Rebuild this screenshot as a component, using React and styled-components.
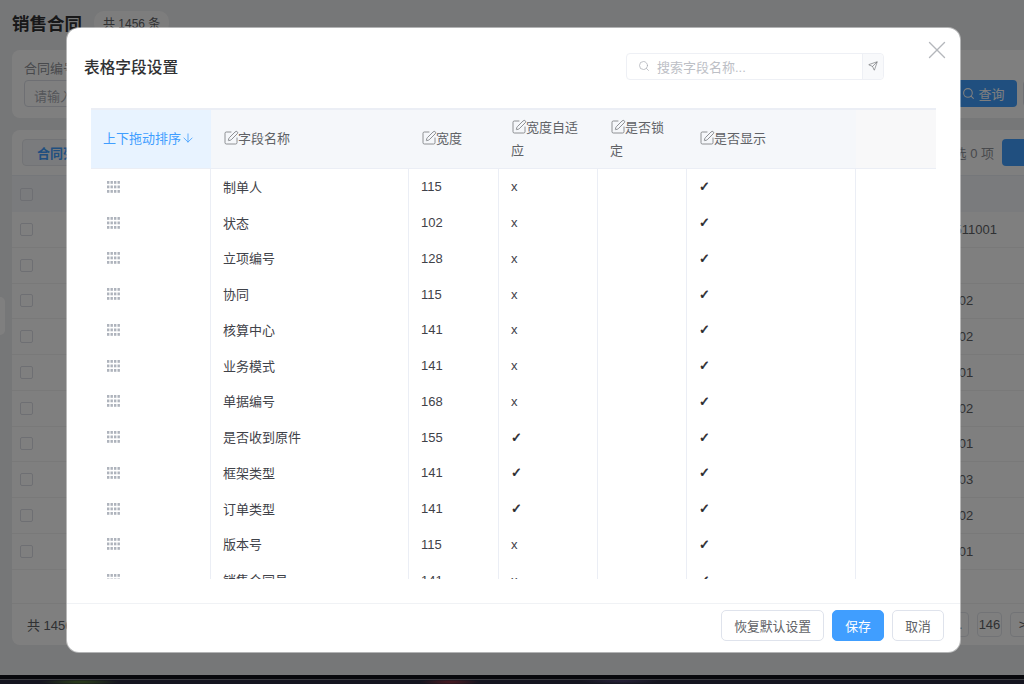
import React from "react";
import styled, { createGlobalStyle } from "styled-components";
import { ArrowDown, Search, Send, SquarePen, X } from "lucide-react";

const fields = [
  { name: "制单人", width: 115, fit: false },
  { name: "状态", width: 102, fit: false },
  { name: "立项编号", width: 128, fit: false },
  { name: "协同", width: 115, fit: false },
  { name: "核算中心", width: 141, fit: false },
  { name: "业务模式", width: 141, fit: false },
  { name: "单据编号", width: 168, fit: false },
  { name: "是否收到原件", width: 155, fit: true },
  { name: "框架类型", width: 141, fit: true },
  { name: "订单类型", width: 141, fit: true },
  { name: "版本号", width: 115, fit: false },
  { name: "销售合同号", width: 141, fit: false },
];

const backgroundRows = ["20511001", "", "SO02", "SO02", "SO01", "SO02", "SO01", "SO03", "SO02", "SO01"];

function GripIcon() {
  const dots = [];
  for (let row = 0; row < 3; row++) {
    for (let col = 0; col < 4; col++) {
      dots.push(<rect key={`${row}-${col}`} x={col * 3.5} y={row * 4.5} width="2.4" height="2.8" />);
    }
  }
  return (
    <svg width="13" height="12" viewBox="0 0 13 12" fill="#aeb3bc">
      {dots}
    </svg>
  );
}

function EditLabel({ children }) {
  return (
    <>
      <EditIcon size={16} strokeWidth={1.2} />
      {children}
    </>
  );
}

export default function App() {
  return (
    <>
      <GlobalStyle />
      <Screen>
        <Page>
          <TitleRow>
            <PageTitle>销售合同</PageTitle>
            <CountBadge>共 1456 条</CountBadge>
          </TitleRow>
          <FilterCard>
            <FilterField>
              <FilterLabel>合同编号</FilterLabel>
              <FilterInput>请输入</FilterInput>
            </FilterField>
            <FilterActions>
              <QueryButton>
                <Search size={13} />
                查询
              </QueryButton>
              <ResetButton />
            </FilterActions>
          </FilterCard>
          <TableCard>
            <TableToolbar>
              <TabButton>合同列表</TabButton>
              <Selected>已选 0 项</Selected>
              <AddButton />
            </TableToolbar>
            <BackHead>
              <BackCheck />
            </BackHead>
            {backgroundRows.map((value, index) => (
              <BackRow key={index}>
                <BackCheck />
                <BackValue>{value}</BackValue>
              </BackRow>
            ))}
            <Pager>
              <span>共 1456 条</span>
              <PagerRight>
                <PageButton>…</PageButton>
                <PageButton>146</PageButton>
                <PageButton>&gt;</PageButton>
              </PagerRight>
            </Pager>
          </TableCard>
          <SideHandle />
        </Page>

        <Overlay>
          <Modal>
            <ModalHeader>
              <ModalTitle>表格字段设置</ModalTitle>
              <SearchBox>
                <SearchField>
                  <Search size={12} strokeWidth={1.4} color="#a8abb2" />
                  搜索字段名称...
                </SearchField>
                <SearchAction>
                  <Send size={10} strokeWidth={1.4} color="#606266" />
                </SearchAction>
              </SearchBox>
              <CloseButton>
                <X size={30} strokeWidth={1.1} />
              </CloseButton>
            </ModalHeader>

            <TableWrap>
              <HeadRow>
                <SortCell>
                  上下拖动排序
                  <ArrowDown size={14} strokeWidth={1.4} />
                </SortCell>
                <HeadCell><EditLabel>字段名称</EditLabel></HeadCell>
                <HeadCell><EditLabel>宽度</EditLabel></HeadCell>
                <HeadCell><EditLabel>宽度自适应</EditLabel></HeadCell>
                <HeadCell><EditLabel>是否锁定</EditLabel></HeadCell>
                <HeadCell><EditLabel>是否显示</EditLabel></HeadCell>
                <HeadFiller />
              </HeadRow>
              {fields.map((field) => (
                <BodyRow key={field.name}>
                  <GripCell><GripIcon /></GripCell>
                  <NameCell>{field.name}</NameCell>
                  <Cell>{field.width}</Cell>
                  <Cell>{field.fit ? <Check>✓</Check> : "x"}</Cell>
                  <Cell />
                  <Cell><Check>✓</Check></Cell>
                </BodyRow>
              ))}
            </TableWrap>

            <ModalFooter>
              <FooterButton>恢复默认设置</FooterButton>
              <FooterButton $primary>保存</FooterButton>
              <FooterButton>取消</FooterButton>
            </ModalFooter>
          </Modal>
        </Overlay>
      </Screen>
      <DesktopStrip />
    </>
  );
}

const GlobalStyle = createGlobalStyle`
  html, body {
    margin: 0;
    height: 100%;
    overflow: hidden;
    background: #14141c;
  }
  body {
    font-family: "Liberation Sans", "Noto Sans CJK SC", sans-serif;
    font-size: 13px;
    color: #303133;
  }
  * {
    box-sizing: border-box;
  }
`;

const Screen = styled.div`
  position: relative;
  height: 675px;
  overflow: hidden;
`;

const Page = styled.div`
  height: 100%;
  display: flex;
  flex-direction: column;
  padding: 12px 0 0 12px;
  background: #edeef0;
`;

const TitleRow = styled.div`
  display: flex;
  align-items: center;
  gap: 12px;
  height: 20px;
  margin-bottom: 18px;
`;

const PageTitle = styled.h1`
  margin: 0;
  font-size: 17.5px;
  font-weight: 700;
  color: #303133;
`;

const CountBadge = styled.span`
  padding: 3px 9px;
  border-radius: 10px;
  background: #fbfbfb;
  color: #606266;
  font-size: 12px;
`;

const FilterCard = styled.div`
  display: flex;
  justify-content: space-between;
  align-items: flex-end;
  height: 68px;
  padding: 0 0 11px 12px;
  border-radius: 8px 0 0 8px;
  background: #fff;
  overflow: hidden;
`;

const FilterField = styled.div`
  display: flex;
  flex-direction: column;
  gap: 3px;
`;

const FilterLabel = styled.span`
  color: #909399;
`;

const FilterInput = styled.div`
  width: 200px;
  height: 27px;
  padding: 5px 9px;
  border: 1px solid #dcdfe6;
  border-radius: 4px;
  color: #a8abb2;
`;

const FilterActions = styled.div`
  display: flex;
  gap: 6px;
  margin-right: -42px;
`;

const QueryButton = styled.div`
  display: flex;
  align-items: center;
  justify-content: center;
  gap: 3px;
  width: 67px;
  height: 27px;
  border-radius: 4px;
  background: #409eff;
  color: #fff;
`;

const ResetButton = styled.div`
  width: 43px;
  height: 27px;
  border: 1px solid #dcdfe6;
  border-radius: 4px;
`;

const TableCard = styled.div`
  display: flex;
  flex-direction: column;
  height: 515px;
  margin-top: 12px;
  border-radius: 8px 0 0 8px;
  background: #fff;
  overflow: hidden;
`;

const TableToolbar = styled.div`
  display: flex;
  align-items: center;
  height: 45px;
  padding: 0 0 0 10px;
`;

const TabButton = styled.div`
  display: flex;
  align-items: center;
  height: 27px;
  padding: 0 14px;
  border: 1px solid #e4e7ed;
  border-radius: 4px;
  background: #f5f7fa;
  color: #409eff;
  font-weight: 700;
`;

const Selected = styled.span`
  margin-left: auto;
  color: #909399;
`;

const AddButton = styled.div`
  width: 22px;
  height: 27px;
  margin-left: 8px;
  border-radius: 4px 0 0 4px;
  background: #409eff;
`;

const BackHead = styled.div`
  display: flex;
  align-items: center;
  height: 37px;
  padding-left: 8px;
  border-top: 1px solid #ebeef5;
  background: #f5f7fa;
`;

const BackRow = styled.div`
  display: grid;
  grid-template-columns: 928px 1fr;
  align-items: center;
  height: 35.75px;
  padding-left: 8px;
  border-bottom: 1px solid #f2f2f2;
`;

const BackCheck = styled.span`
  display: block;
  width: 13px;
  height: 13px;
  border: 1px solid #dcdfe6;
  border-radius: 2px;
`;

const BackValue = styled.span`
  margin-left: -8px;
  color: #606266;
  white-space: nowrap;
`;

const Pager = styled.div`
  display: flex;
  align-items: center;
  justify-content: space-between;
  height: 42px;
  flex: none;
  margin-top: auto;
  padding-left: 15px;
  border-top: 1px solid #f2f2f2;
  color: #606266;
`;

const PagerRight = styled.div`
  display: flex;
  align-items: center;
  gap: 8px;
  margin-right: -11px;
`;

const PageButton = styled.span`
  display: flex;
  align-items: center;
  justify-content: center;
  width: 25px;
  height: 25px;
  border: 1px solid #e4e7ed;
  border-radius: 4px;
`;

const SideHandle = styled.div`
  position: absolute;
  left: 0;
  top: 297px;
  width: 5px;
  height: 38px;
  border-radius: 0 6px 6px 0;
  background: #fff;
`;

const Overlay = styled.div`
  position: absolute;
  inset: 0;
  padding: 28px 64px 23px 67px;
  background: rgba(0, 0, 0, 0.5);
`;

const Modal = styled.div`
  position: relative;
  display: flex;
  flex-direction: column;
  height: 624px;
  border-radius: 12px;
  background: #fff;
  box-shadow: 0 0 0 1px rgba(255, 255, 255, 0.45);
`;

const ModalHeader = styled.div`
  display: flex;
  align-items: center;
  justify-content: space-between;
  height: 80px;
  padding: 0 76px 4px 17px;
`;

const ModalTitle = styled.h2`
  margin: 0;
  font-size: 15.7px;
  font-weight: 500;
  color: #303133;
`;

const SearchBox = styled.div`
  display: flex;
  width: 258px;
  height: 27px;
  border: 1px solid #eef0f5;
  border-radius: 4px;
`;

const SearchField = styled.div`
  display: flex;
  align-items: center;
  gap: 7px;
  flex: 1;
  padding-left: 11px;
  color: #bdc0c6;
`;

const SearchAction = styled.div`
  display: flex;
  align-items: center;
  justify-content: center;
  width: 21px;
  border-left: 1px solid #eef0f5;
  background: #f8f9fb;
  border-radius: 0 4px 4px 0;
`;

const CloseButton = styled.div`
  position: absolute;
  top: 6.5px;
  right: 8.5px;
  display: flex;
  color: #b4b7bc;
`;

const TableWrap = styled.div`
  height: 471px;
  margin: 0 24px;
  overflow: hidden;
  border-top: 2px solid #ebeef5;
`;

const HeadRow = styled.div`
  display: grid;
  grid-template-columns: 120px 198px 90px 99px 89px 169px 1fr;
  height: 59px;
  border-bottom: 1px solid #ebeef5;
  background: #f5f7fa;
`;

const HeadCell = styled.div`
  align-self: center;
  padding: 0 12px 1px;
  line-height: 23px;
  color: #606266;
`;

const SortCell = styled.div`
  display: flex;
  align-items: center;
  gap: 0;
  padding: 0 0 3px 12px;
  background: #e8f3ff;
  color: #409eff;
  white-space: nowrap;
`;

const HeadFiller = styled.div`
  background: #f8f8f9;
`;

const EditIcon = styled(SquarePen)`
  vertical-align: -3px;
  margin-right: -1px;
  color: #73767a;
`;

const BodyRow = styled.div`
  display: grid;
  grid-template-columns: 120px 198px 90px 99px 89px 169px;
  height: 35.75px;
`;

const Cell = styled.div`
  display: flex;
  align-items: center;
  padding: 0 12px;
  border-right: 1px solid #ebeef5;
  color: #3f4249;
`;

const GripCell = styled(Cell)`
  padding-left: 16px;
`;

const NameCell = styled(Cell)`
  padding-bottom: 1px;
`;

const Check = styled.span`
  font-family: "DejaVu Sans", sans-serif;
  color: #1f2329;
  -webkit-text-stroke: 0.5px #1f2329;
`;

const ModalFooter = styled.div`
  display: flex;
  justify-content: flex-end;
  gap: 8px;
  height: 49px;
  margin-top: 24px;
  padding: 6px 16px 0;
  border-top: 1px solid #f0f2f5;
`;

const FooterButton = styled.div`
  display: flex;
  align-items: center;
  justify-content: center;
  height: 31px;
  padding: 0 12px;
  min-width: 52px;
  font-size: 12.8px;
  border: 1px solid ${(props) => (props.$primary ? "#409eff" : "#dfe3ec")};
  border-radius: 5px;
  background: ${(props) => (props.$primary ? "#409eff" : "#fff")};
  color: ${(props) => (props.$primary ? "#fff" : "#606266")};
`;

const DesktopStrip = styled.div`
  height: 9px;
  border-top: 4px solid #08080c;
  box-shadow: inset 0 1px 0 #3d3d42;
  background:
    radial-gradient(ellipse 40px 3px at 80px 3px, #2c3f1a, transparent),
    radial-gradient(ellipse 30px 3px at 450px 3px, #4a1a20, transparent),
    radial-gradient(ellipse 40px 3px at 620px 2px, #262038, transparent),
    #15151f;
`;
